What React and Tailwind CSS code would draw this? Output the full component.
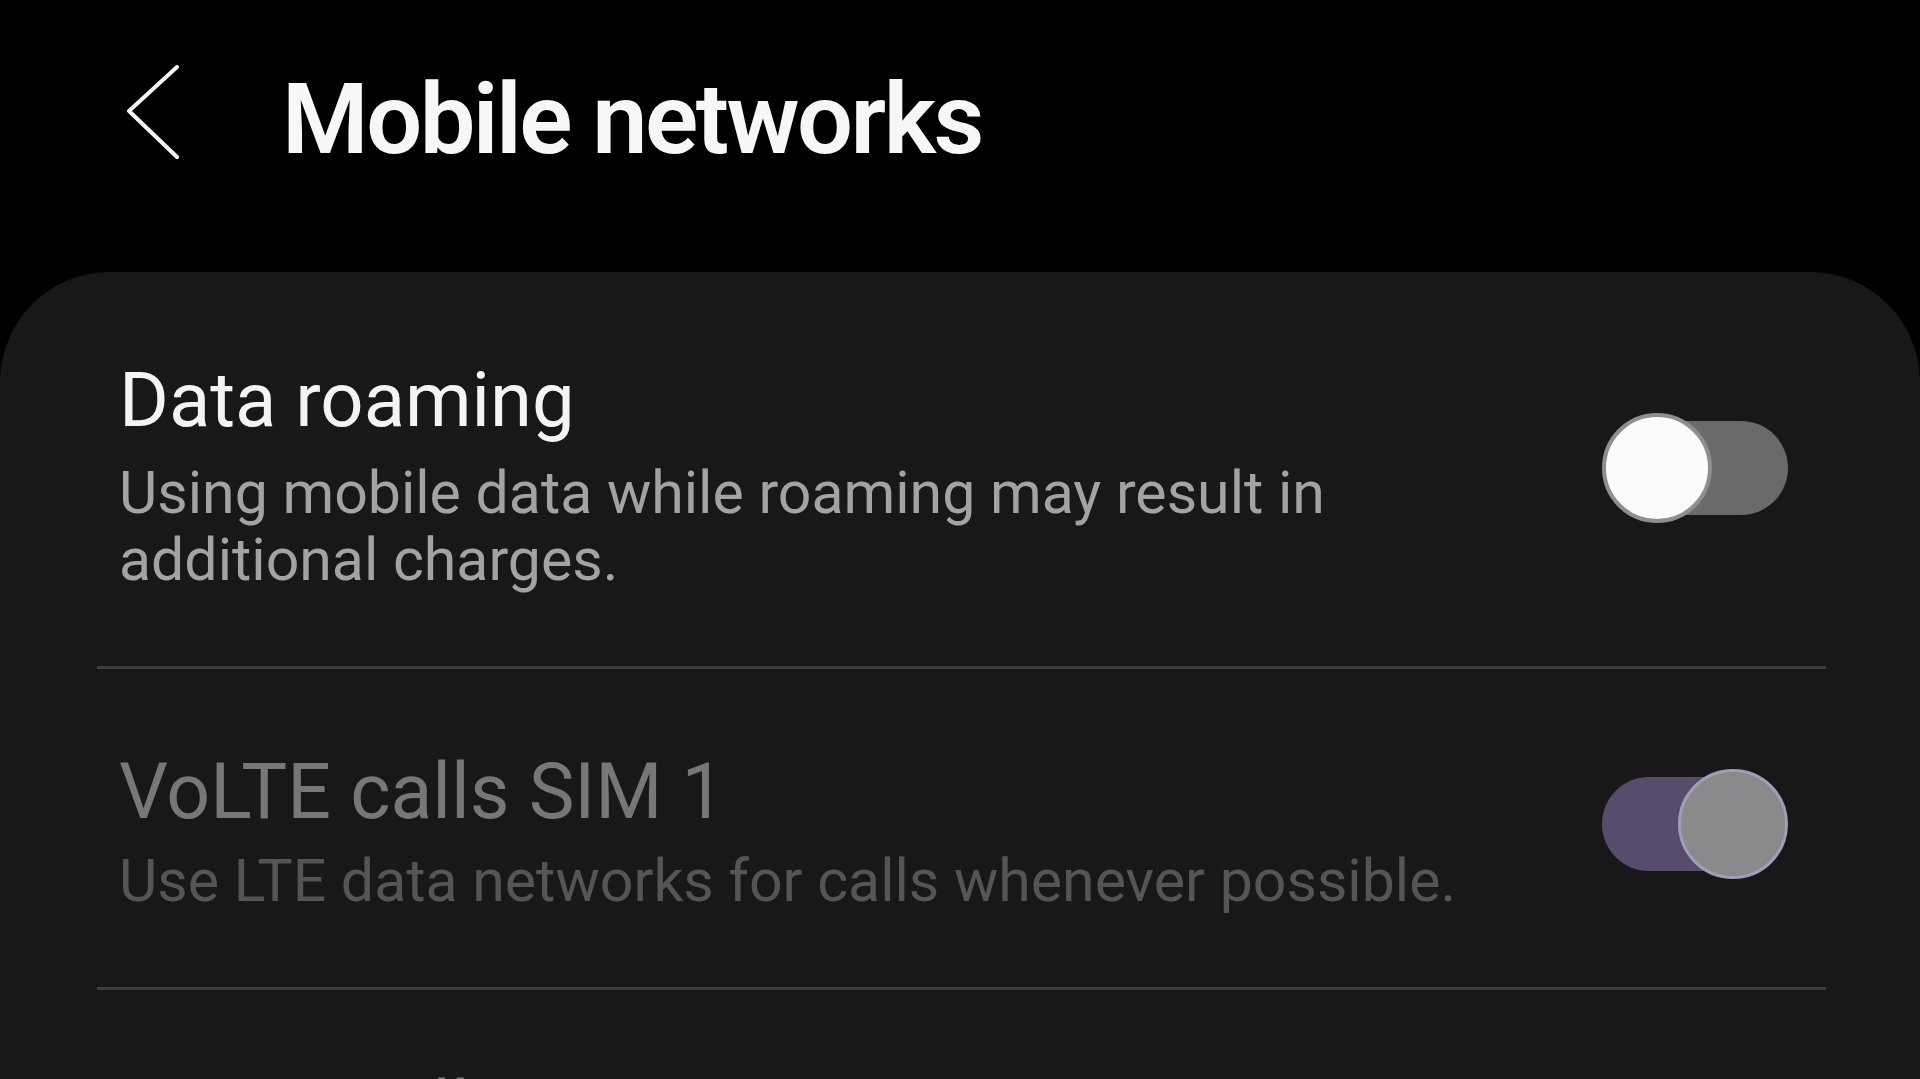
import React from "react";

function Toggle({ on }) {
  if (on) {
    return (
      <div className="relative w-[186px] h-[110px] shrink-0">
        <div className="absolute left-0 right-[4px] top-[8px] h-[94px] rounded-full bg-[#584c6c]" />
        <div className="absolute right-0 top-0 w-[110px] h-[110px] rounded-full bg-[#8a898b] border-[3px] border-[#a49cbb]" />
      </div>
    );
  }
  return (
    <div className="relative w-[186px] h-[110px] shrink-0">
      <div className="absolute left-[8px] right-0 top-[8px] h-[94px] rounded-full bg-[#6a6a68]" />
      <div className="absolute left-0 top-0 w-[110px] h-[110px] rounded-full bg-[#fbfbfb] border-[4px] border-[#8e8e8e]" />
    </div>
  );
}

export default function App() {
  return (
    <div
      className="w-[1920px] h-[1079px] overflow-hidden bg-black flex flex-col"
      style={{ fontFamily: "Roboto, 'Noto Sans', sans-serif" }}
    >
      {/* Header */}
      <div className="h-[272px] shrink-0 flex items-start pt-[65px] pl-[126px]">
        <svg width="56" height="96" viewBox="0 0 56 96" className="shrink-0">
          <polyline
            points="51,2 3,46 51,92"
            fill="none"
            stroke="#f5f5f5"
            strokeWidth="4"
            strokeLinecap="round"
            strokeLinejoin="round"
          />
        </svg>
        <div className="ml-[100px] mt-[5px] text-[99px] leading-[99px] font-semibold text-[#f7f7f7] tracking-[-2.5px]">
          Mobile networks
        </div>
      </div>

      {/* Card */}
      <div className="flex-1 bg-[#181818] rounded-t-[110px] px-[97px]">
        {/* Row 1 */}
        <div className="flex items-center justify-between pl-[22px] pr-[35px] pt-[83px] pb-[73px]">
          <div className="w-[1420px]">
            <div className="text-[76px] leading-[90px] text-[#f4f4f4]">Data roaming</div>
            <div className="mt-[14px] text-[59px] leading-[67px] text-[#a3a3a3]">
              Using mobile data while roaming may result in additional charges.
            </div>
          </div>
          <div className="mb-[12px]">
            <Toggle on={false} />
          </div>
        </div>
        <div className="h-[3px] bg-[#3c3c3c] mr-[-3px]" />

        {/* Row 2 */}
        <div className="flex items-center justify-between pl-[22px] pr-[35px] pt-[78px] pb-[73px]">
          <div className="w-[1420px]">
            <div className="text-[77px] leading-[90px] text-[#777777]">VoLTE calls SIM 1</div>
            <div className="mt-[10px] text-[59px] leading-[67px] text-[#555555]">
              Use LTE data networks for calls whenever possible.
            </div>
          </div>
          <div className="mb-[13px]">
            <Toggle on={true} />
          </div>
        </div>
        <div className="h-[3px] bg-[#3c3c3c] mr-[-3px]" />

        {/* Row 3 (cut off) */}
        <div className="flex items-center justify-between pl-[22px] pr-[35px] pt-[75px]">
          <div className="w-[1420px]">
            <div className="text-[77px] leading-[90px] text-[#777777]">VoLTE calls SIM 2</div>
          </div>
        </div>
      </div>
    </div>
  );
}
